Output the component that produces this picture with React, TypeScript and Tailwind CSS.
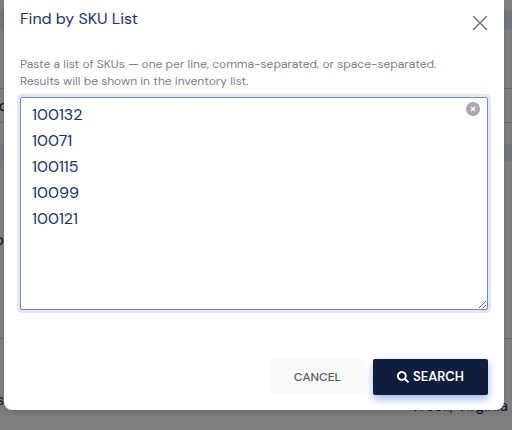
import { useState } from 'react';
import { FaSearch } from 'react-icons/fa';

const DEFAULT_SKUS = ['100132', '10071', '100115', '10099', '100121'];

function InventoryPage() {
  return (
    <div className="min-h-screen bg-[#fcfcfc] pt-[11px] text-[#1b3058]" inert>
      <div className="h-[18px] bg-[#e6edf5]" />
      <div className="mt-[59px] flex h-[35px] items-center border-y border-gray-300 text-base">
        <span className="flex w-2 justify-end whitespace-nowrap">ro</span>
      </div>
      <div className="mt-[21px] h-[17px] bg-[#e6edf5]" />
      <div className="flex h-[178px] items-start border-b border-gray-300 pt-[67px] text-base">
        <span className="flex w-1 justify-end whitespace-nowrap">o</span>
      </div>
      <div className="flex items-start justify-between pt-[51px] pr-1 text-[15px] leading-5">
        <span className="flex w-1 justify-end whitespace-nowrap">s</span>
        <span className="pt-1.5">Wooli, Virginia</span>
      </div>
    </div>
  );
}

export default function App() {
  const [skus, setSkus] = useState(DEFAULT_SKUS.join('\n'));

  return (
    <div className="relative min-h-screen overflow-hidden font-['DM_Sans','Inter',sans-serif]">
      <InventoryPage />

      {/* Backdrop */}
      <div className="absolute inset-0 bg-black/50 pr-2 pl-1">
        <div
          role="dialog"
          aria-modal="true"
          aria-labelledby="sku-title"
          className="rounded-b-lg bg-white shadow-md"
        >
          <header className="flex h-14 items-start justify-between border-b border-[#fcfcfc] px-4 pt-2">
            <h2 id="sku-title" className="text-base leading-[22px] text-[#1d3263]">
              Find by SKU List
            </h2>
            <button type="button" aria-label="Close" className="mt-[7px] text-[#777]">
              <svg className="size-4" viewBox="0 0 16 16" fill="none" stroke="currentColor" strokeWidth="1.6" strokeLinecap="round">
                <path d="M1.5 1.5l13 13M14.5 1.5l-13 13" />
              </svg>
            </button>
          </header>

          <div className="px-4 pb-8">
            <label htmlFor="sku-list" className="block pb-[7px] text-xs leading-[17px] text-[#7d8086]">
              Paste a list of SKUs — one per line, comma-separated, or space-separated.
              <br />
              Results will be shown in the inventory list.
            </label>
            <div className="relative">
              <textarea
                id="sku-list"
                value={skus}
                onChange={(e) => setSkus(e.target.value)}
                className="block h-[213px] w-full resize rounded-xs border border-[#6f88c4] bg-white px-[11px] py-1 text-base leading-[26px] text-[#1d3263] ring-3 ring-[#e4e8f5] outline-none"
              />
              <button
                type="button"
                aria-label="Clear list"
                onClick={() => setSkus('')}
                className="absolute top-[5px] right-2 flex size-[14px] items-center justify-center rounded-full bg-[#aaa] text-white"
              >
                <svg className="size-1.5" viewBox="0 0 6 6" stroke="currentColor" strokeWidth="1.5">
                  <path d="M1 1l4 4M5 1l-4 4" />
                </svg>
              </button>
            </div>
          </div>

          <footer className="flex justify-end gap-2 border-t border-[#fcfcfc] px-4 pt-4 pb-[15px]">
            <button
              type="button"
              className="h-9 rounded-xs bg-[#f8f9fb] px-6 text-xs font-medium text-[#55585e]"
            >
              CANCEL
            </button>
            <button
              type="button"
              className="flex h-9 items-center gap-1 rounded-xs bg-[#0f1e3d] px-6 text-[13px] font-semibold text-white shadow-[0_4px_8px_#9fb4e6]"
            >
              <FaSearch className="size-3" />
              SEARCH
            </button>
          </footer>
        </div>
      </div>
    </div>
  );
}
